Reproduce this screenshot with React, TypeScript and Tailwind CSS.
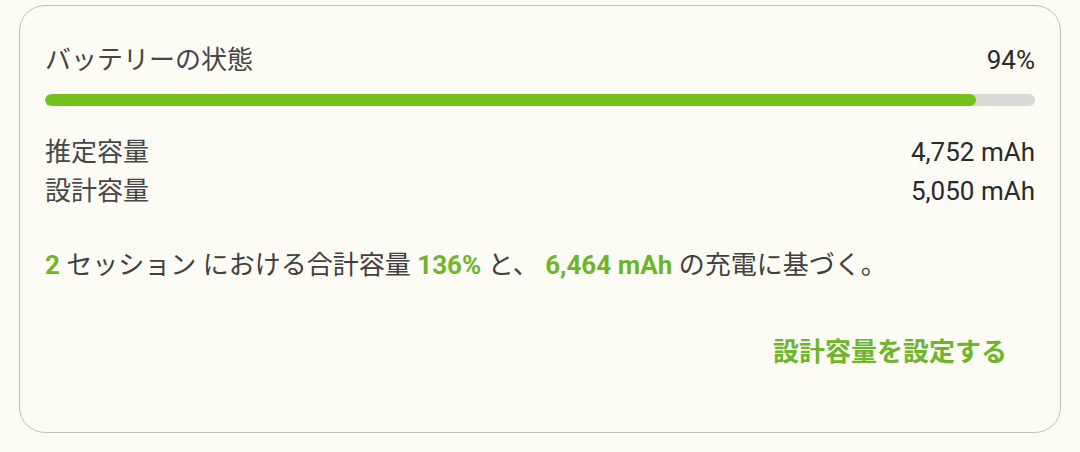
import React from 'react'

const FONT = "font-['Roboto','Noto_Sans_CJK_JP',sans-serif]"

const stats = [
  { label: '推定容量', value: '4,752 mAh' },
  { label: '設計容量', value: '5,050 mAh' },
]

export default function App() {
  const pct = 94
  return (
    <div className={`h-[452px] w-[1080px] bg-[#fcfbf4] pt-[5px] px-[19px] ${FONT}`}>
      <div className="h-[428px] rounded-[26px] border border-[#c2c2b9] px-[25px]">
        {/* header */}
        <div className="mt-[34px] flex items-center justify-between text-[26px] leading-[40px]">
          <span className="text-[#454545]">バッテリーの状態</span>
          <span className="text-[#2a2a2a]">{pct}%</span>
        </div>

        {/* bar */}
        <div className="mt-[14px] h-[12px] rounded-full bg-[#d9d9d7] overflow-hidden">
          <div className="h-full rounded-full bg-[#74c11b]" style={{ width: `${pct}%` }} />
        </div>

        {/* rows */}
        <div className="mt-[27px]">
          {stats.map(s => (
            <div key={s.label} className="flex justify-between text-[26px] leading-[39px]">
              <span className="text-[#474747]">{s.label}</span>
              <span className="text-[#2a2a2a]">{s.value}</span>
            </div>
          ))}
        </div>

        <p className="mt-[35px] text-[26px] leading-[39px] text-[#404040]">
          <b className="font-bold text-[#6db52c]">2</b> セッション における合計容量{' '}
          <b className="font-bold text-[#6db52c]">136%</b> と、{' '}
          <b className="font-bold text-[#6db52c]">6,464 mAh</b> の充電に基づく。
        </p>

        <div className="mt-[47px] flex justify-end pr-[28px]">
          <button className="text-[26px] leading-[40px] font-bold text-[#6db52c]">設計容量を設定する</button>
        </div>
      </div>
    </div>
  )
}
